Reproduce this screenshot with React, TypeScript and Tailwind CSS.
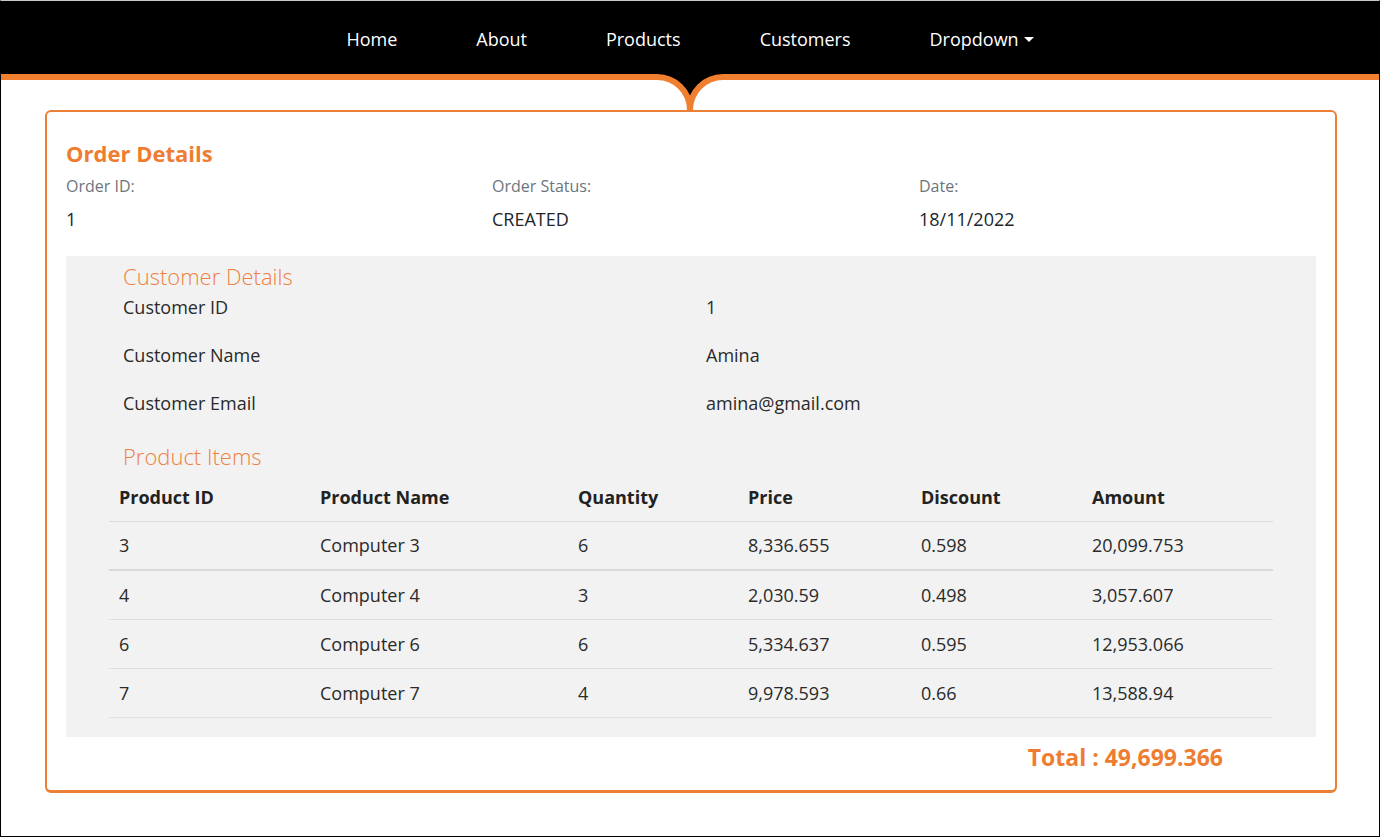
import React from "react";

const F = { fontFamily: '"Open Sans", "Noto Sans", sans-serif' };

const items = [
  { id: "3", name: "Computer 3", qty: "6", price: "8,336.655", disc: "0.598", amt: "20,099.753" },
  { id: "4", name: "Computer 4", qty: "3", price: "2,030.59", disc: "0.498", amt: "3,057.607" },
  { id: "6", name: "Computer 6", qty: "6", price: "5,334.637", disc: "0.595", amt: "12,953.066" },
  { id: "7", name: "Computer 7", qty: "4", price: "9,978.593", disc: "0.66", amt: "13,588.94" },
];

export default function App() {
  return (
    <div
      style={F}
      className="relative w-[1380px] h-[837px] overflow-hidden bg-white border-x border-b border-black border-t border-t-[#c8c8c8] text-[#212529]"
    >
      {/* Nav */}
      <nav className="h-[73px] bg-black flex items-center justify-center gap-[79px] text-white text-[18px] pt-[3px]">
        <a className="leading-[26px]">Home</a>
        <a className="leading-[26px]">About</a>
        <a className="leading-[26px]">Products</a>
        <a className="leading-[26px]">Customers</a>
        <a className="leading-[26px] flex items-center">
          Dropdown
          <span className="ml-[5px] mt-[1px] w-0 h-0 border-x-[5px] border-x-transparent border-t-[5px] border-t-white" />
        </a>
      </nav>
      <div className="h-[6px] bg-[#f07f2f]" />

      {/* notch */}
      <svg
        className="absolute left-1/2 -ml-[40px] top-[69px]"
        width="80"
        height="45"
        viewBox="650 70 80 45"
      >
        <path d="M657 73 V77 A33 33 0 0 1 690 110 A33 33 0 0 1 723 77 V73 Z" fill="#000" />
        <path
          d="M650 77 H657 A33 33 0 0 1 690 110 A33 33 0 0 1 723 77 H730"
          fill="none"
          stroke="#f07f2f"
          strokeWidth="6"
        />
      </svg>

      {/* Card */}
      <div className="ml-[44px] mr-[42px] mt-[30px] border-2 border-b-[3px] border-[#ec7f36] rounded-[6px] px-[19px] pt-[26px] pb-[18px]">
        <h2 className="text-[22px] leading-[30px] font-bold text-[#ef7d31]">Order Details</h2>
        <div className="grid grid-cols-[426px_427px_1fr] mt-[7px]">
          <div>
            <div className="text-[16px] leading-[22px] text-[#6c757d]">Order ID:</div>
            <div className="text-[18px] leading-[24px] mt-[10px]">1</div>
          </div>
          <div>
            <div className="text-[16px] leading-[22px] text-[#6c757d]">Order Status:</div>
            <div className="text-[18px] leading-[24px] mt-[10px]">CREATED</div>
          </div>
          <div>
            <div className="text-[16px] leading-[22px] text-[#6c757d]">Date:</div>
            <div className="text-[18px] leading-[24px] mt-[10px]">18/11/2022</div>
          </div>
        </div>

        <div className="mt-[25px] bg-[#f2f2f2] px-[43px] pt-[5px] pb-[19px]">
          <div className="pl-[14px]">
            <h3 className="text-[22px] leading-[30px] font-light text-[#ef8040]">Customer Details</h3>
            <div className="mt-[4px]">
              {[
                ["Customer ID", "1"],
                ["Customer Name", "Amina"],
                ["Customer Email", "amina@gmail.com"],
              ].map(([k, v]) => (
                <div key={k} className="grid grid-cols-[583px_1fr] h-[48px] text-[18px] leading-[24px] text-[#2a2a2a]">
                  <div>{k}</div>
                  <div>{v}</div>
                </div>
              ))}
            </div>
            <h3 className="mt-[2px] text-[22px] leading-[30px] font-light text-[#ef8040]">Product Items</h3>
          </div>

          <table className="mt-[3px] w-full table-fixed border-collapse text-[18px] leading-[24px]">
            <colgroup>
              <col className="w-[201px]" />
              <col className="w-[258px]" />
              <col className="w-[170px]" />
              <col className="w-[173px]" />
              <col className="w-[171px]" />
              <col />
            </colgroup>
            <thead>
              <tr className="h-[47px] border-b border-[#dcdcdc] text-[#222]">
                <th className="text-left pl-[10px] font-bold">Product ID</th>
                <th className="text-left pl-[10px] font-bold">Product Name</th>
                <th className="text-left pl-[10px] font-bold">Quantity</th>
                <th className="text-left pl-[10px] font-bold">Price</th>
                <th className="text-left pl-[10px] font-bold">Discount</th>
                <th className="text-left pl-[10px] font-bold">Amount</th>
              </tr>
            </thead>
            <tbody className="text-[#2a2a2a]">
              {items.map((r, i) => (
                <tr
                  key={r.id}
                  className={
                    i === 0
                      ? "h-[49px] border-b-2 border-[#dadada]"
                      : "h-[49px] border-b border-[#e0e0e0]"
                  }
                >
                  <td className="pl-[10px]">{r.id}</td>
                  <td className="pl-[10px]">{r.name}</td>
                  <td className="pl-[10px]">{r.qty}</td>
                  <td className="pl-[10px]">{r.price}</td>
                  <td className="pl-[10px]">{r.disc}</td>
                  <td className="pl-[10px]">{r.amt}</td>
                </tr>
              ))}
            </tbody>
          </table>
        </div>

        <div className="flex justify-end pr-[93px] mt-[5px]">
          <div className="text-[23px] leading-[30px] font-bold text-[#ef7d31]">Total : 49,699.366</div>
        </div>
      </div>
    </div>
  );
}
